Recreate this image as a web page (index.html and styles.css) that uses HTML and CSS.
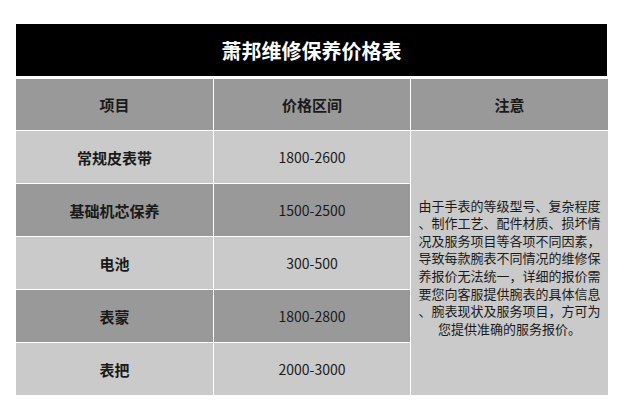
FILE: index.html
```html
<!DOCTYPE html>
<html lang="zh">
<head>
<meta charset="utf-8">
<link rel="stylesheet" href="styles.css">
</head>
<body>
<div class="wrap">
  <div class="title">萧邦维修保养价格表</div>
  <div class="grid">
    <div class="cell head">项目</div>
    <div class="cell head">价格区间</div>
    <div class="cell head">注意</div>

    <div class="cell light item">常规皮表带</div>
    <div class="cell light price">1800-2600</div>
    <div class="cell note">由于手表的等级型号、复杂程度<br>、制作工艺、配件材质、损坏情<br>况及服务项目等各项不同因素，<br>导致每款腕表不同情况的维修保<br>养报价无法统一，详细的报价需<br>要您向客服提供腕表的具体信息<br>、腕表现状及服务项目，方可为<br>您提供准确的服务报价。</div>

    <div class="cell dark item">基础机芯保养</div>
    <div class="cell dark price">1500-2500</div>

    <div class="cell light item">电池</div>
    <div class="cell light price">300-500</div>

    <div class="cell dark item">表蒙</div>
    <div class="cell dark price">1800-2800</div>

    <div class="cell light item">表把</div>
    <div class="cell light price">2000-3000</div>
  </div>
</div>
</body>
</html>
```
FILE: styles.css
```css
html, body {
  margin: 0;
  padding: 0;
  background: #ffffff;
}
.wrap {
  padding: 24px 0 0 16px;
  width: 592px;
  font-family: "Noto Sans CJK SC", "Liberation Sans", sans-serif;
}
.title {
  width: 591px;
  height: 52px;
  background: #000000;
  color: #ffffff;
  font-size: 20px;
  font-weight: 700;
  display: flex;
  align-items: center;
  justify-content: center;
  letter-spacing: 0;
  margin-bottom: 3px;
}
.grid {
  display: grid;
  grid-template-columns: 197px 196px 197px;
  grid-template-rows: 51px repeat(5, 52px);
  gap: 1px;
  background: #ffffff;
}
.cell {
  display: flex;
  align-items: center;
  justify-content: center;
  color: #1a1a1a;
}
.head {
  background: #999999;
  font-size: 15px;
  font-weight: 700;
}
.light { background: #cacaca; }
.dark { background: #999999; }
.item {
  font-size: 15px;
  font-weight: 700;
}
.price {
  font-size: 14px;
  font-weight: 400;
}
.note {
  grid-column: 3;
  grid-row: 2 / span 5;
  background: #cacaca;
  font-size: 13px;
  line-height: 17.6px;
  text-align: center;
  white-space: nowrap;
  padding-top: 8px;
  box-sizing: border-box;
}
```
